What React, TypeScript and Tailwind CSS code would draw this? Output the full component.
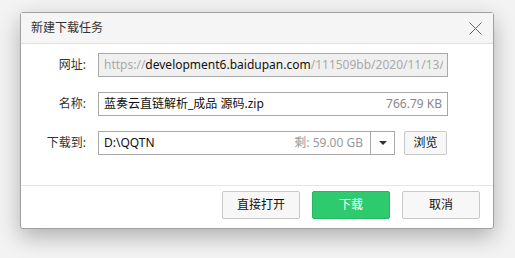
import React from 'react';

const font = { fontFamily: '"Noto Sans", "Noto Sans CJK SC", sans-serif' };

function Label({ children }: { children: React.ReactNode }) {
  return <div className="w-[65px] shrink-0 text-right text-[12px] text-[#333]">{children}</div>;
}

function Button({ children, primary }: { children: React.ReactNode; primary?: boolean }) {
  return (
    <button
      className={
        primary
          ? 'h-[28px] w-[78px] rounded-[2px] border border-[#27b463] bg-[#2ecb6e] text-[12px] text-white'
          : 'h-[28px] w-[78px] rounded-[2px] border border-[#c8c8c8] bg-[#f7f7f7] text-[12px] text-[#111]'
      }
    >
      {children}
    </button>
  );
}

export default function App() {
  return (
    <div className="h-[258px] w-[515px] overflow-hidden bg-[#f3f3f3] pl-[20px] pt-[12px]" style={font}>
      <div className="flex h-[217px] w-[474px] flex-col rounded-[3px] border border-[#a0a0a0] bg-white shadow-[0_8px_22px_rgba(0,0,0,0.28)]">
        {/* title bar */}
        <div className="flex h-[31px] shrink-0 items-center justify-between border-b border-[#e2e2e2] bg-[#f5f5f5] pl-[10px] pr-[11px]">
          <span className="text-[12px] text-[#333]">新建下载任务</span>
          <svg width="13" height="13" viewBox="0 0 13 13" className="text-[#666]">
            <path d="M0.5 0.5L12.5 12.5M12.5 0.5L0.5 12.5" stroke="currentColor" strokeWidth="1" />
          </svg>
        </div>

        {/* body */}
        <div className="flex flex-1 flex-col gap-[15px] pt-[9px]">
          <div className="flex items-center gap-[12px]">
            <Label>网址:</Label>
            <div className="flex h-[24px] w-[350px] items-center border border-[#a8a8a8] bg-[#f0f0f0] pl-[5px] pr-[4px] text-[12px]">
              <div className="flex-1 overflow-hidden whitespace-nowrap">
                <span className="text-[#aaa]">https://</span>
                <span className="text-[#111]">development6.baidupan.com</span>
                <span className="text-[#aaa]">/111509bb/2020/11/13/lanzou_source.zip</span>
              </div>
            </div>
          </div>
          <div className="flex items-center gap-[12px]">
            <Label>名称:</Label>
            <div className="flex h-[24px] w-[350px] items-center justify-between border border-[#a8a8a8] bg-white pl-[5px] pr-[5px] text-[12px]">
              <span className="text-[#111]">蓝奏云直链解析_成品 源码.zip</span>
              <span className="text-[#888]">766.79 KB</span>
            </div>
          </div>
          <div className="flex items-center gap-[12px]">
            <Label>下载到:</Label>
            <div className="flex h-[24px] w-[297px] items-center border border-[#a8a8a8] bg-white text-[12px]">
              <div className="flex flex-1 items-center justify-between pl-[5px] pr-[7px]">
                <span className="text-[#111]">D:\QQTN</span>
                <span className="text-[#999]">剩: 59.00 GB</span>
              </div>
              <div className="flex h-full w-[24px] items-center justify-center border-l border-[#a8a8a8]">
                <svg width="8" height="4" viewBox="0 0 8 4">
                  <path d="M0 0H8L4 4Z" fill="#333" />
                </svg>
              </div>
            </div>
            <button className="-ml-[3px] h-[24px] w-[43px] rounded-[2px] border border-[#c8c8c8] bg-[#f7f7f7] text-[12px] text-[#111]">
              浏览
            </button>
          </div>
        </div>

        {/* footer */}
        <div className="flex h-[43px] shrink-0 items-center justify-end gap-[12px] border-t border-[#e6e6e6] pb-[4px] pr-[13px]">
          <Button>直接打开</Button>
          <Button primary>下载</Button>
          <Button>取消</Button>
        </div>
      </div>
    </div>
  );
}
